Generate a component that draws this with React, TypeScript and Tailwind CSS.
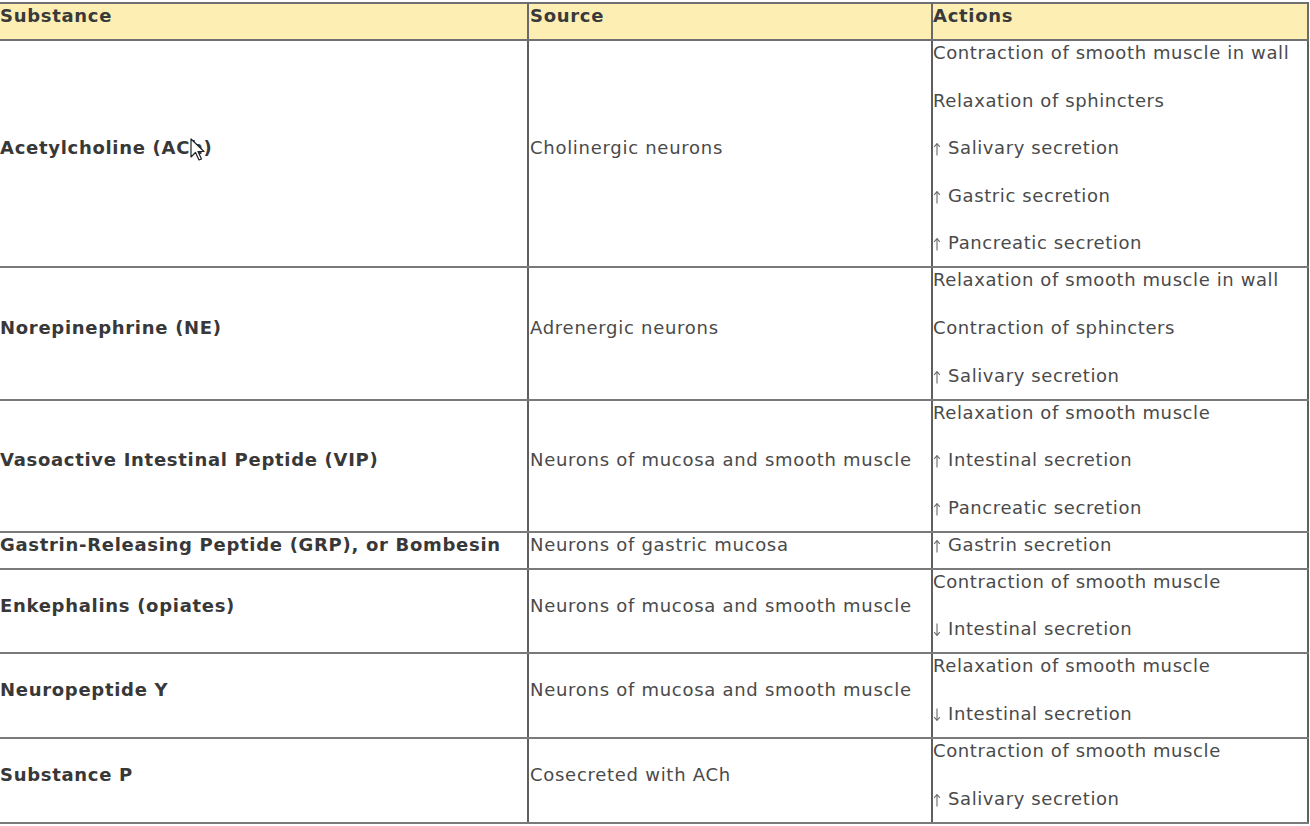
import React from 'react'

type Row = {
  substance: string
  source: string
  actions: string[]
}

const rows: Row[] = [
  {
    substance: 'Acetylcholine (ACh)',
    source: 'Cholinergic neurons',
    actions: [
      'Contraction of smooth muscle in wall',
      'Relaxation of sphincters',
      '↑ Salivary secretion',
      '↑ Gastric secretion',
      '↑ Pancreatic secretion',
    ],
  },
  {
    substance: 'Norepinephrine (NE)',
    source: 'Adrenergic neurons',
    actions: ['Relaxation of smooth muscle in wall', 'Contraction of sphincters', '↑ Salivary secretion'],
  },
  {
    substance: 'Vasoactive Intestinal Peptide (VIP)',
    source: 'Neurons of mucosa and smooth muscle',
    actions: ['Relaxation of smooth muscle', '↑ Intestinal secretion', '↑ Pancreatic secretion'],
  },
  {
    substance: 'Gastrin-Releasing Peptide (GRP), or Bombesin',
    source: 'Neurons of gastric mucosa',
    actions: ['↑ Gastrin secretion'],
  },
  {
    substance: 'Enkephalins (opiates)',
    source: 'Neurons of mucosa and smooth muscle',
    actions: ['Contraction of smooth muscle', '↓ Intestinal secretion'],
  },
  {
    substance: 'Neuropeptide Y',
    source: 'Neurons of mucosa and smooth muscle',
    actions: ['Relaxation of smooth muscle', '↓ Intestinal secretion'],
  },
  {
    substance: 'Substance P',
    source: 'Cosecreted with ACh',
    actions: ['Contraction of smooth muscle', '↑ Salivary secretion'],
  },
]

// thin narrow arrow like the source's, drawn instead of the wide DejaVu glyph
const Arrow = ({ down }: { down?: boolean }) => (
  <svg
    width="8"
    height="14"
    viewBox="0 0 8 14"
    className={down ? 'mr-[7px] inline-block rotate-180 align-[-2px]' : 'mr-[7px] inline-block align-[-2px]'}
    aria-label={down ? '↓' : '↑'}
  >
    <path d="M4 1.5 V13.5 M1.2 4.8 L4 1.5 L6.8 4.8" fill="none" stroke="#6a6a6a" strokeWidth="1.1" />
  </svg>
)

const ActionText = ({ text }: { text: string }) => {
  if (text.startsWith('↑')) return <><Arrow />{text.slice(2)}</>
  if (text.startsWith('↓')) return <><Arrow down />{text.slice(2)}</>
  return <>{text}</>
}

const Cursor = () => (
  <svg width="16" height="24" viewBox="0 0 16 24" className="pointer-events-none absolute left-[190px] top-[138px]">
    <path d="M1 1 L1 19 L5.5 14.5 L9 22 L11.5 21 L8 13.5 L14 13.5 Z" fill="#fff" stroke="#222" strokeWidth="1.2" strokeLinejoin="round" />
  </svg>
)

const App: React.FC = () => {
  return (
    <div className="relative h-[826px] w-[1310px] overflow-hidden bg-white pt-[2px] font-['DejaVu_Sans',Verdana,sans-serif] text-[18px] leading-[24px] tracking-[0.6px] text-[#4a4a4a]">
      <table className="w-[1308px] table-fixed border-collapse">
        <colgroup>
          <col className="w-[528px]" />
          <col className="w-[404px]" />
          <col className="w-[376px]" />
        </colgroup>
        <thead>
          <tr className="bg-[#fdefb4]">
            {['Substance', 'Source', 'Actions'].map((h) => (
              <th
                key={h}
                className="border-2 border-x-[#6a6a6a] border-y-[#707070] pb-[11px] pl-[1px] text-left align-top font-bold tracking-[0.7px] text-[#3a3a3a] first:border-l-0 first:pl-0 last:pl-0"
              >
                {h}
              </th>
            ))}
          </tr>
        </thead>
        <tbody>
          {rows.map((r) => (
            <tr key={r.substance}>
              <td className="whitespace-nowrap border-2 border-l-0 border-x-[#5f5f5f] border-y-[#7a7a7a] pb-[11px] align-middle font-bold tracking-[0.7px] text-[#383838]">
                {r.substance}
              </td>
              <td className="whitespace-nowrap border-2 border-x-[#5f5f5f] border-y-[#7a7a7a] pb-[11px] pl-[1px] align-middle tracking-[0.72px]">
                {r.source}
              </td>
              <td className="border-2 border-x-[#5f5f5f] border-y-[#7a7a7a] pb-[11px] align-top">
                <div className="flex flex-col gap-[23.6px]">
                  {r.actions.map((a) => (
                    <p key={a} className="whitespace-nowrap">
                      <ActionText text={a} />
                    </p>
                  ))}
                </div>
              </td>
            </tr>
          ))}
        </tbody>
      </table>
      <Cursor />
    </div>
  )
}

export default App
